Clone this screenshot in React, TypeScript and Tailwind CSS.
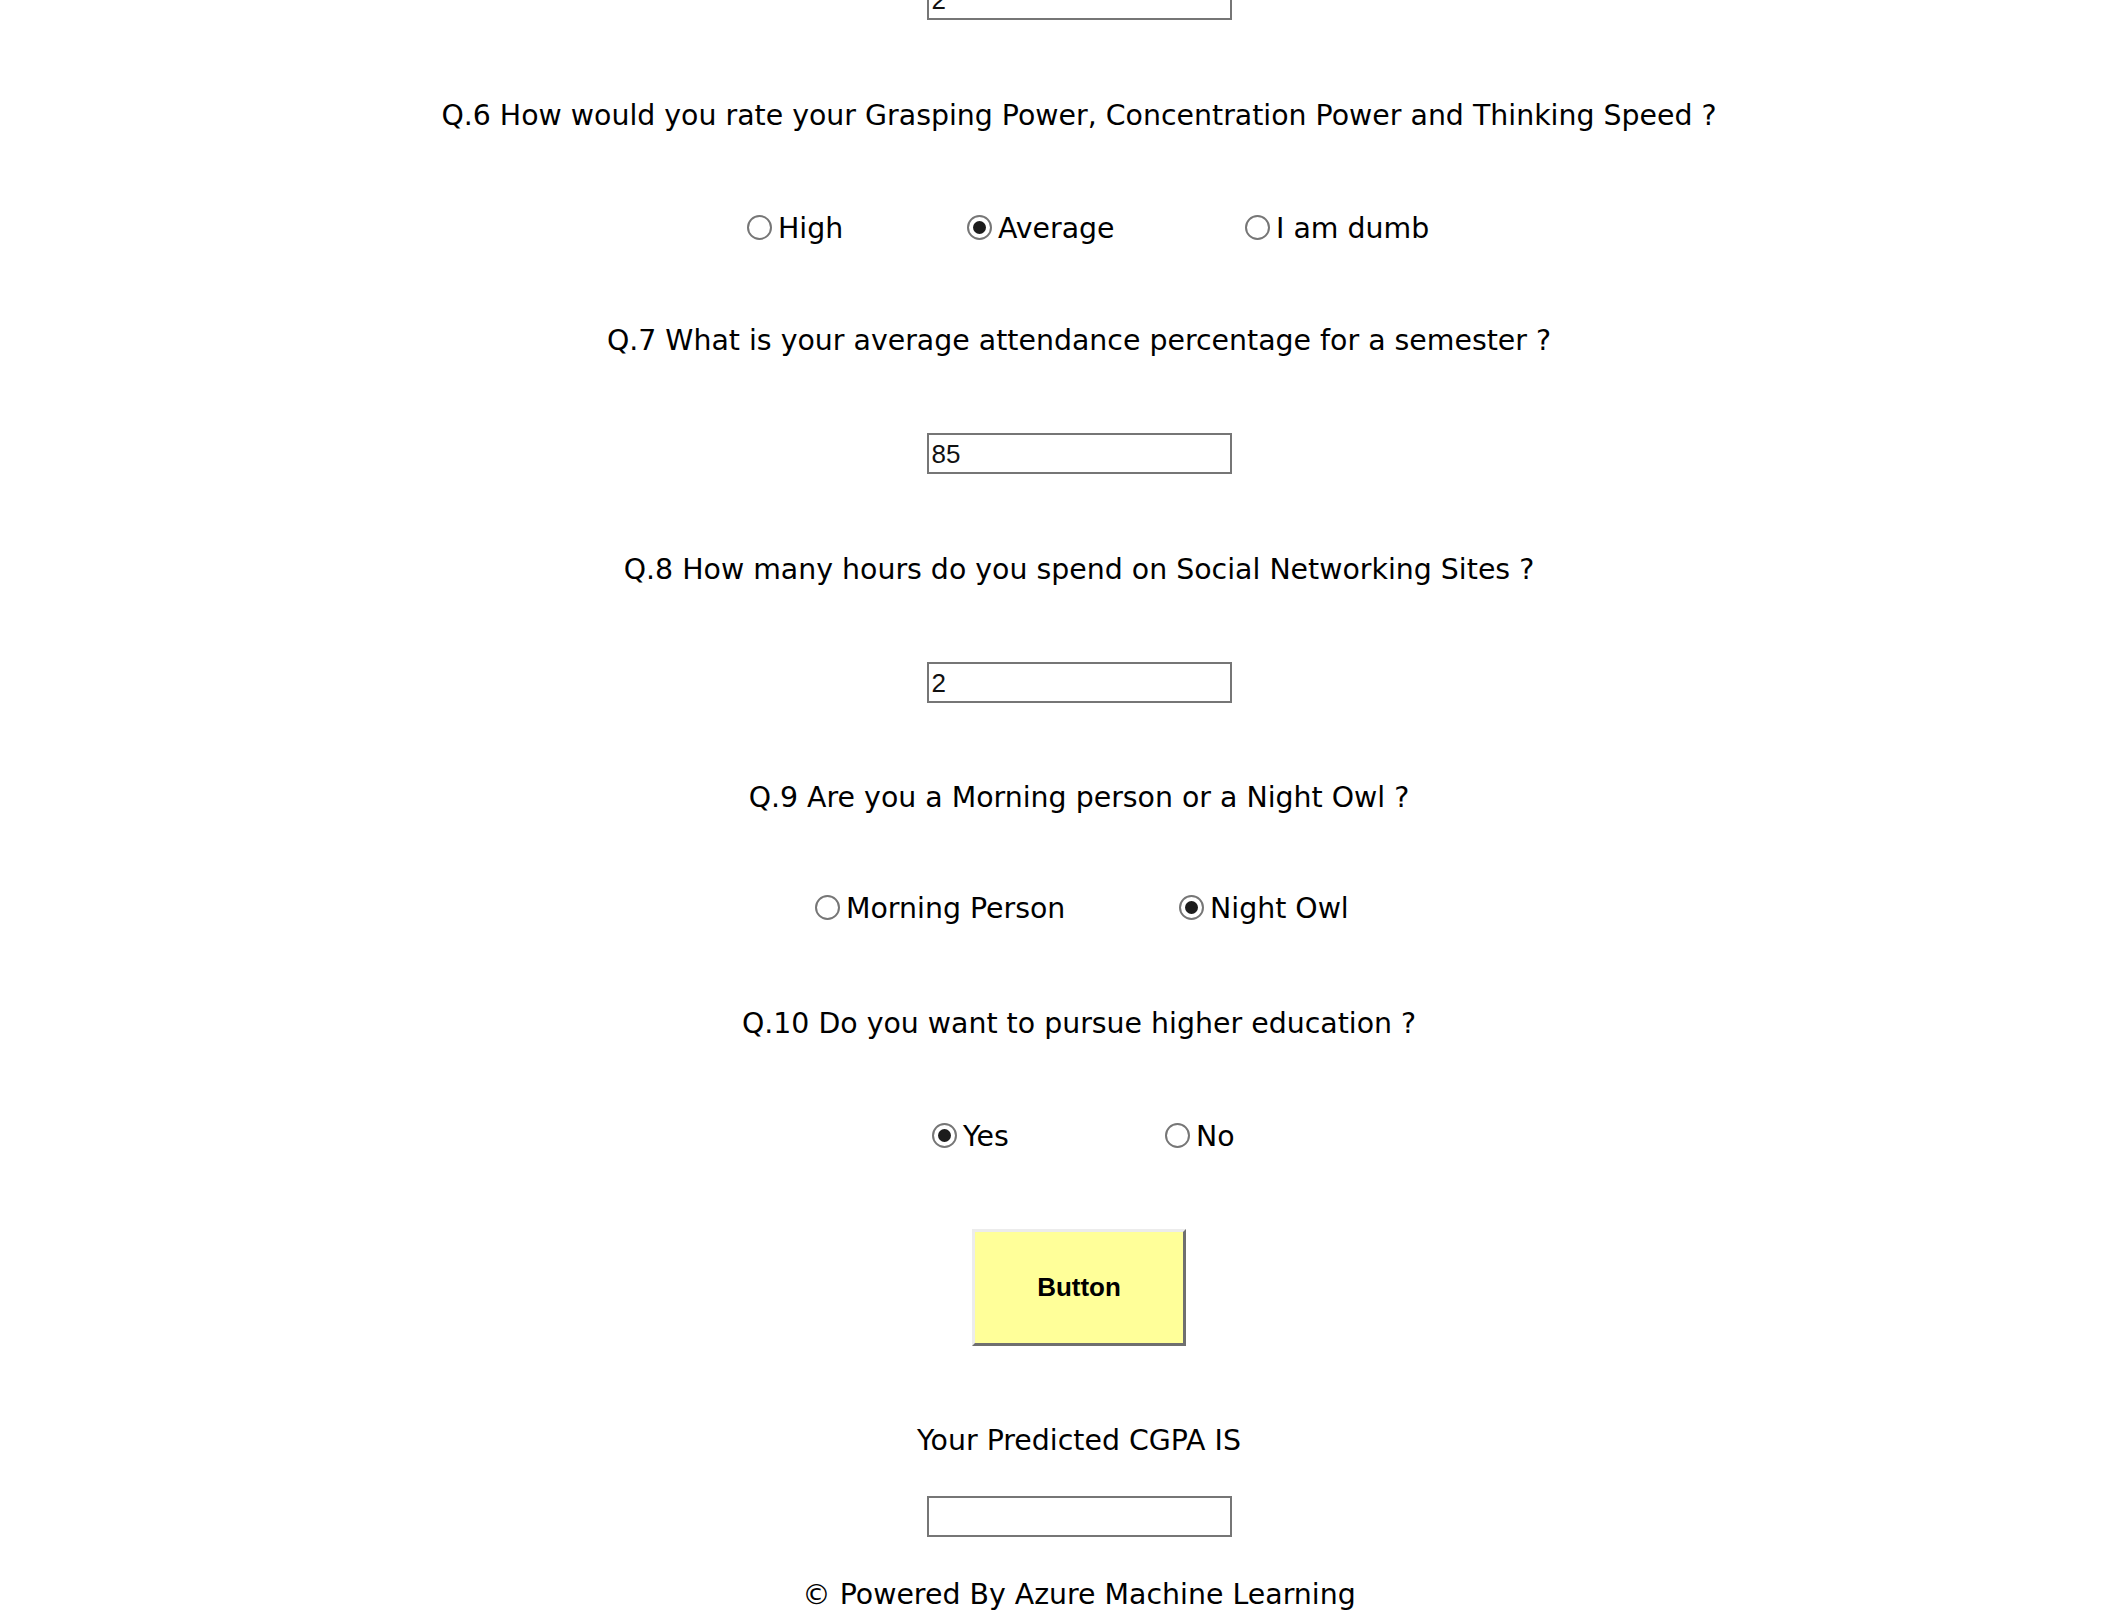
import React from "react";

function Radio({ checked, label }: { checked?: boolean; label: string }) {
  return (
    <span className="flex items-center">
      <span className="mb-[4px] flex h-[25px] w-[25px] shrink-0 items-center justify-center rounded-full border-2 border-[#767676] bg-white">
        {checked ? <span className="h-[13px] w-[13px] rounded-full bg-[#1c1c1c]" /> : null}
      </span>
      <span className="ml-[6px] whitespace-nowrap">{label}</span>
    </span>
  );
}

function TextBox({ value }: { value?: string }) {
  return (
    <div className="flex h-[41px] w-[305px] items-center border-2 border-[#767676] bg-white pl-[3px] font-['Liberation_Sans',Arial,sans-serif] text-[26px] leading-none text-[#111]">
      {value}
    </div>
  );
}

function Question({ text, mt }: { text: string; mt: string }) {
  return <div className={`flex h-[40px] items-center justify-center whitespace-nowrap ${mt}`}>{text}</div>;
}

export default function App() {
  return (
    <div className="min-h-[1611px] w-full overflow-hidden bg-white font-['DejaVu_Sans',sans-serif] text-[28.4px] text-black">
      <div className="flex flex-col">
        {/* top partially visible input */}
        <div className="mt-[-21px] flex h-[41px] justify-center pl-[40px]">
          <TextBox value="2" />
        </div>

        <div className="pl-[40px]">
          <Question mt="mt-[76px]" text="Q.6 How would you rate your Grasping Power, Concentration Power and Thinking Speed ?" />
        </div>

        <div className="mt-[73px] flex h-[40px] items-center pl-[747px]">
          <div className="w-[220px]"><Radio label="High" /></div>
          <div className="w-[278px]"><Radio checked label="Average" /></div>
          <div><Radio label="I am dumb" /></div>
        </div>

        <div className="pl-[40px]">
          <Question mt="mt-[72px]" text="Q.7 What is your average attendance percentage for a semester ?" />
        </div>

        <div className="mt-[72px] flex h-[41px] justify-center pl-[40px]">
          <TextBox value="85" />
        </div>

        <div className="pl-[40px]">
          <Question mt="mt-[76px]" text="Q.8 How many hours do you spend on Social Networking Sites ?" />
        </div>

        <div className="mt-[72px] flex h-[41px] justify-center pl-[40px]">
          <TextBox value="2" />
        </div>

        <div className="pl-[40px]">
          <Question mt="mt-[75px]" text="Q.9 Are you a Morning person or a Night Owl ?" />
        </div>

        <div className="mt-[71px] flex h-[40px] items-center pl-[815px]">
          <div className="w-[364px]"><Radio label="Morning Person" /></div>
          <div><Radio checked label="Night Owl" /></div>
        </div>

        <div className="pl-[40px]">
          <Question mt="mt-[75px]" text="Q.10 Do you want to pursue higher education ?" />
        </div>

        <div className="mt-[73px] flex h-[40px] items-center pl-[932px]">
          <div className="w-[233px]"><Radio checked label="Yes" /></div>
          <div><Radio label="No" /></div>
        </div>

        <div className="mt-[72px] flex justify-center pl-[40px]">
          <button
            type="button"
            className="h-[117px] w-[214px] border-[3px] border-t-[#ececec] border-l-[#ececec] border-r-[#6f6f6f] border-b-[#6f6f6f] bg-[#ffff99] font-['Liberation_Sans',Arial,sans-serif] text-[26px] font-bold text-black"
          >
            Button
          </button>
        </div>

        <div className="pl-[40px]">
          <Question mt="mt-[75px]" text="Your Predicted CGPA IS" />
        </div>

        <div className="mt-[35px] flex h-[41px] justify-center pl-[40px]">
          <TextBox />
        </div>

        <div className="pl-[40px]">
          <Question mt="mt-[38px]" text="© Powered By Azure Machine Learning" />
        </div>
      </div>
    </div>
  );
}
